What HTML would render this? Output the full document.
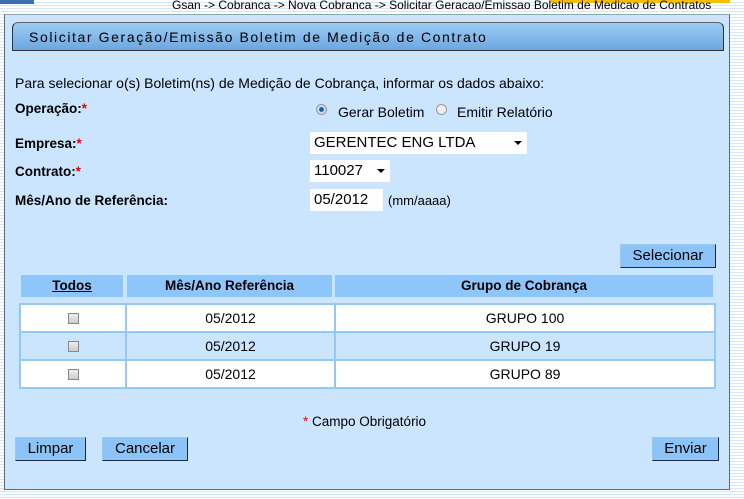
<!DOCTYPE html>
<html><head><meta charset="utf-8"><style>
*{margin:0;padding:0;box-sizing:border-box}
body{width:744px;height:499px;overflow:hidden;position:relative;font-family:"Liberation Sans",Arial,sans-serif;font-size:13px;color:#000;
background:repeating-linear-gradient(to bottom,#fff 0,#fff 2px,#d7e6f5 2px,#d7e6f5 3px)}
.a{position:absolute;white-space:nowrap}
.b{font-weight:bold}
.r{color:#e00}
.panel{position:absolute;left:4px;top:14px;width:726px;height:476px;background:#cbe5fe;border:1px solid #5a6a80;border-top-color:#8aa}
.title{position:absolute;left:12px;top:22px;width:712px;height:29px;background:linear-gradient(#9cccf6,#6ba7e0);border:1px solid #333;border-top-color:#666;border-radius:6px 6px 0 0;font-size:14px;letter-spacing:1.6px;padding:6px 0 0 16px;color:#000}
.btn{position:absolute;height:24px;background:#8cc4fa;border:1px solid #1a2a44;border-top-color:#9cd;border-left-color:#9cd;font-size:15px;text-align:center;line-height:22px}
.sel{position:absolute;background:#fff;font-size:15px;padding:2px 4px;height:22px}
.dd:after{content:"";position:absolute;right:5px;top:9px;border:4px solid transparent;border-top:4px solid #000;border-bottom:0}
.th{position:absolute;top:275px;height:22px;background:#8ec6fb;font-weight:bold;text-align:center;line-height:22px;font-size:13.5px}
.tbl{position:absolute;left:19px;top:303px;width:697px;height:86px;border:2px solid #94c8f6;background:#94c8f6}
.row{position:absolute;left:0;width:693px;height:26px}
.cell{position:absolute;top:0;height:100%;text-align:center;line-height:26px;font-size:14px}
.cb{position:absolute;left:47px;top:8px;width:11px;height:11px;border:1px solid #888;background:linear-gradient(#eee,#ccc)}
.rad{position:absolute;width:11px;height:11px;border-radius:50%;border:1px solid #999;background:#eee}
.l{font-size:13.5px}
</style></head><body>
<div class="a" style="left:0;top:0;width:34px;height:4px;background:#3b6fb0"></div>
<div class="a" style="right:14px;top:0;width:180px;height:3px;background:#f5c000"></div>
<div class="a" style="left:172px;top:-2px;font-size:12px">Gsan -&gt; Cobranca -&gt; Nova Cobranca -&gt; Solicitar Geracao/Emissao Boletim de Medicao de Contratos</div>
<div class="panel"></div>
<div class="title">Solicitar Geração/Emissão Boletim de Medição de Contrato</div>
<div class="a" style="left:15px;top:75px;font-size:14px">Para selecionar o(s) Boletim(ns) de Medição de Cobrança, informar os dados abaixo:</div>
<div class="a b l" style="left:15px;top:101px">Operação:<span class="r">*</span></div>
<div class="rad" style="left:316px;top:104px;background:radial-gradient(#1a5f9a 30%,#cde 45%)"></div>
<div class="a" style="left:338px;top:104px;font-size:14px">Gerar Boletim</div>
<div class="rad" style="left:436px;top:104px"></div>
<div class="a" style="left:457px;top:104px;font-size:14px">Emitir Relatório</div>
<div class="a b l" style="left:15px;top:136px">Empresa:<span class="r">*</span></div>
<div class="sel dd" style="left:310px;top:132px;width:217px">GERENTEC ENG LTDA</div>
<div class="a b l" style="left:15px;top:164px">Contrato:<span class="r">*</span></div>
<div class="sel dd" style="left:310px;top:160px;width:80px">110027</div>
<div class="a b l" style="left:15px;top:193px">Mês/Ano de Referência:</div>
<div class="sel" style="left:310px;top:189px;width:73px">05/2012</div>
<div class="a" style="left:388px;top:193px">(mm/aaaa)</div>
<div class="btn" style="left:620px;top:244px;width:96px">Selecionar</div>
<div class="th" style="left:21px;width:102px"><span style="text-decoration:underline">Todos</span></div>
<div class="th" style="left:127px;width:205px">Mês/Ano Referência</div>
<div class="th" style="left:335px;width:378px">Grupo de Cobrança</div>
<div class="tbl">
<div class="row" style="top:0;background:#fff"><div class="cb"></div><div class="cell" style="left:104px;width:2px;background:#94c8f6"></div><div class="cell" style="left:106px;width:207px">05/2012</div><div class="cell" style="left:313px;width:2px;background:#94c8f6"></div><div class="cell" style="left:315px;width:378px">GRUPO 100</div></div>
<div class="row" style="top:28px;background:#cbe5fe"><div class="cb"></div><div class="cell" style="left:104px;width:2px;background:#94c8f6"></div><div class="cell" style="left:106px;width:207px">05/2012</div><div class="cell" style="left:313px;width:2px;background:#94c8f6"></div><div class="cell" style="left:315px;width:378px">GRUPO 19</div></div>
<div class="row" style="top:56px;height:26px;background:#fff"><div class="cb"></div><div class="cell" style="left:104px;width:2px;background:#94c8f6"></div><div class="cell" style="left:106px;width:207px">05/2012</div><div class="cell" style="left:313px;width:2px;background:#94c8f6"></div><div class="cell" style="left:315px;width:378px">GRUPO 89</div></div>
</div>
<div class="a" style="left:303px;top:414px;font-size:13.5px"><span class="r">*</span> Campo Obrigatório</div>
<div class="btn" style="left:15px;top:437px;width:71px">Limpar</div>
<div class="btn" style="left:102px;top:437px;width:86px">Cancelar</div>
<div class="btn" style="left:652px;top:437px;width:67px">Enviar</div>
</body></html>
